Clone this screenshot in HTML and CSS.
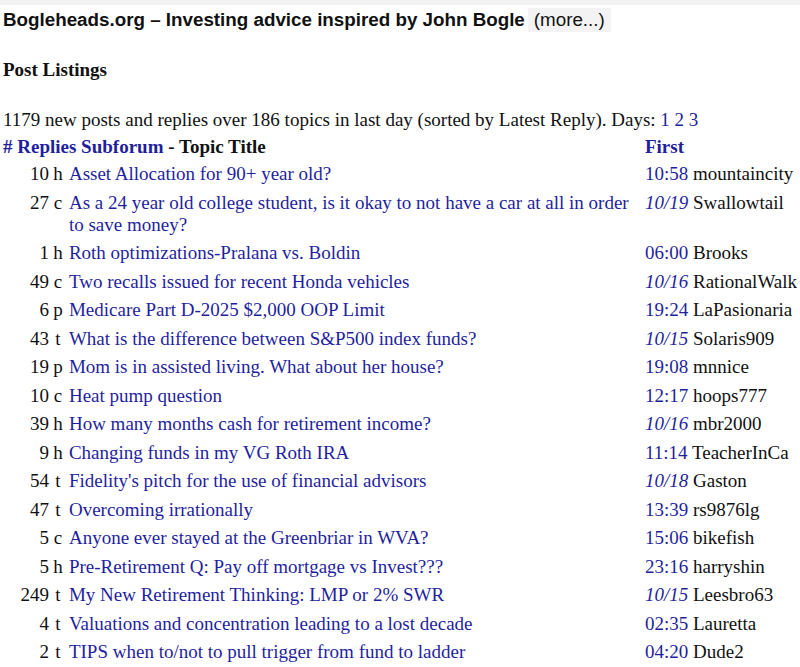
FILE: index.html
```html
<!DOCTYPE html>
<html lang="en">
<head>
  <meta charset="UTF-8">
  <meta name="viewport" content="width=device-width, initial-scale=1.0">
  <title>Bogleheads.org - Post Listings</title>
  <link rel="stylesheet" href="styles.css">
</head>
<body>
  <!-- site header -->
  <header class="site-header">
    <span class="site-name">Bogleheads.org – Investing advice inspired by John Bogle</span>
    <span class="more">(more...)</span>
  </header>

  <h3 class="page-title">Post Listings</h3>

  <p class="summary">1179 new posts and replies over 186 topics in last day (sorted by Latest Reply). Days: <a href="#">1</a> <a href="#">2</a> <a href="#">3</a></p>

  <!-- post table -->
  <table class="posts">
    <tr class="head">
      <th class="cols" colspan="3"><a href="#"># Replies</a> <a href="#">Subforum</a> - Topic Title</th>
      <th class="first"><a href="#">First</a></th>
    </tr>
    <tr><td class="num">10</td><td class="sub">h</td><td class="topic"><a href="#">Asset Allocation for 90+ year old?</a></td><td class="first"><a href="#">10:58</a> mountaincity</td></tr>
    <tr><td class="num">27</td><td class="sub">c</td><td class="topic"><a href="#">As a 24 year old college student, is it okay to not have a car at all in order to save money?</a></td><td class="first"><a href="#"><i>10/19</i></a> Swallowtail</td></tr>
    <tr><td class="num">1</td><td class="sub">h</td><td class="topic"><a href="#">Roth optimizations-Pralana vs. Boldin</a></td><td class="first"><a href="#">06:00</a> Brooks</td></tr>
    <tr><td class="num">49</td><td class="sub">c</td><td class="topic"><a href="#">Two recalls issued for recent Honda vehicles</a></td><td class="first"><a href="#"><i>10/16</i></a> RationalWalk</td></tr>
    <tr><td class="num">6</td><td class="sub">p</td><td class="topic"><a href="#">Medicare Part D-2025 $2,000 OOP Limit</a></td><td class="first"><a href="#">19:24</a> LaPasionaria</td></tr>
    <tr><td class="num">43</td><td class="sub">t</td><td class="topic"><a href="#">What is the difference between S&amp;P500 index funds?</a></td><td class="first"><a href="#"><i>10/15</i></a> Solaris909</td></tr>
    <tr><td class="num">19</td><td class="sub">p</td><td class="topic"><a href="#">Mom is in assisted living. What about her house?</a></td><td class="first"><a href="#">19:08</a> mnnice</td></tr>
    <tr><td class="num">10</td><td class="sub">c</td><td class="topic"><a href="#">Heat pump question</a></td><td class="first"><a href="#">12:17</a> hoops777</td></tr>
    <tr><td class="num">39</td><td class="sub">h</td><td class="topic"><a href="#">How many months cash for retirement income?</a></td><td class="first"><a href="#"><i>10/16</i></a> mbr2000</td></tr>
    <tr><td class="num">9</td><td class="sub">h</td><td class="topic"><a href="#">Changing funds in my VG Roth IRA</a></td><td class="first"><a href="#">11:14</a> TeacherInCa</td></tr>
    <tr><td class="num">54</td><td class="sub">t</td><td class="topic"><a href="#">Fidelity's pitch for the use of financial advisors</a></td><td class="first"><a href="#"><i>10/18</i></a> Gaston</td></tr>
    <tr><td class="num">47</td><td class="sub">t</td><td class="topic"><a href="#">Overcoming irrationally</a></td><td class="first"><a href="#">13:39</a> rs9876lg</td></tr>
    <tr><td class="num">5</td><td class="sub">c</td><td class="topic"><a href="#">Anyone ever stayed at the Greenbriar in WVA?</a></td><td class="first"><a href="#">15:06</a> bikefish</td></tr>
    <tr><td class="num">5</td><td class="sub">h</td><td class="topic"><a href="#">Pre-Retirement Q: Pay off mortgage vs Invest???</a></td><td class="first"><a href="#">23:16</a> harryshin</td></tr>
    <tr><td class="num">249</td><td class="sub">t</td><td class="topic"><a href="#">My New Retirement Thinking: LMP or 2% SWR</a></td><td class="first"><a href="#"><i>10/15</i></a> Leesbro63</td></tr>
    <tr><td class="num">4</td><td class="sub">t</td><td class="topic"><a href="#">Valuations and concentration leading to a lost decade</a></td><td class="first"><a href="#">02:35</a> Lauretta</td></tr>
    <tr><td class="num">2</td><td class="sub">t</td><td class="topic"><a href="#">TIPS when to/not to pull trigger from fund to ladder</a></td><td class="first"><a href="#">04:20</a> Dude2</td></tr>
  </table>
</body>
</html>
```

FILE: styles.css
```css
/* page */
html {
  overflow: hidden;
}

body {
  margin: 0;
  padding: 0 0 0 3px;
  font-family: "Liberation Serif", "Times New Roman", serif;
  font-size: 19px;
  color: #111;
  background-color: white;
  border-top: 5px solid #f2f2f2;
}

a {
  color: #1f1f9e;
  text-decoration: none;
}

/* header */
.site-header {
  display: flex;
  align-items: center;
  height: 30px;
  font-family: "Liberation Sans", Arial, sans-serif;
  font-size: 18.8px;
}

.site-name {
  font-weight: bold;
}

.more {
  margin-left: 3px;
  padding: 0 6px;
  line-height: 24px;
  background-color: #f3f3f3;
}

.page-title {
  margin: 24px 0 0;
  font-size: 19px;
  line-height: 22px;
}

.summary {
  margin: 28px 0 0;
  line-height: 22px;
}

/* table */
.posts {
  border-collapse: collapse;
}

.posts th,
.posts td {
  padding: 3px 3px 3.5px;
  line-height: 22px;
  vertical-align: top;
}

.posts th {
  text-align: left;
  padding: 5px 3px 2px;
}

.posts th.cols {
  padding-left: 0;
}

.posts th.first {
  padding-left: 10px;
}

.posts .num {
  width: 43px;
  padding-right: 0;
  text-align: right;
}

.posts .sub {
  width: 10px;
  padding-left: 4px;
  text-align: center;
}

.posts .topic {
  width: 565px;
}

.posts .first {
  white-space: nowrap;
  padding-left: 10px;
}
```
